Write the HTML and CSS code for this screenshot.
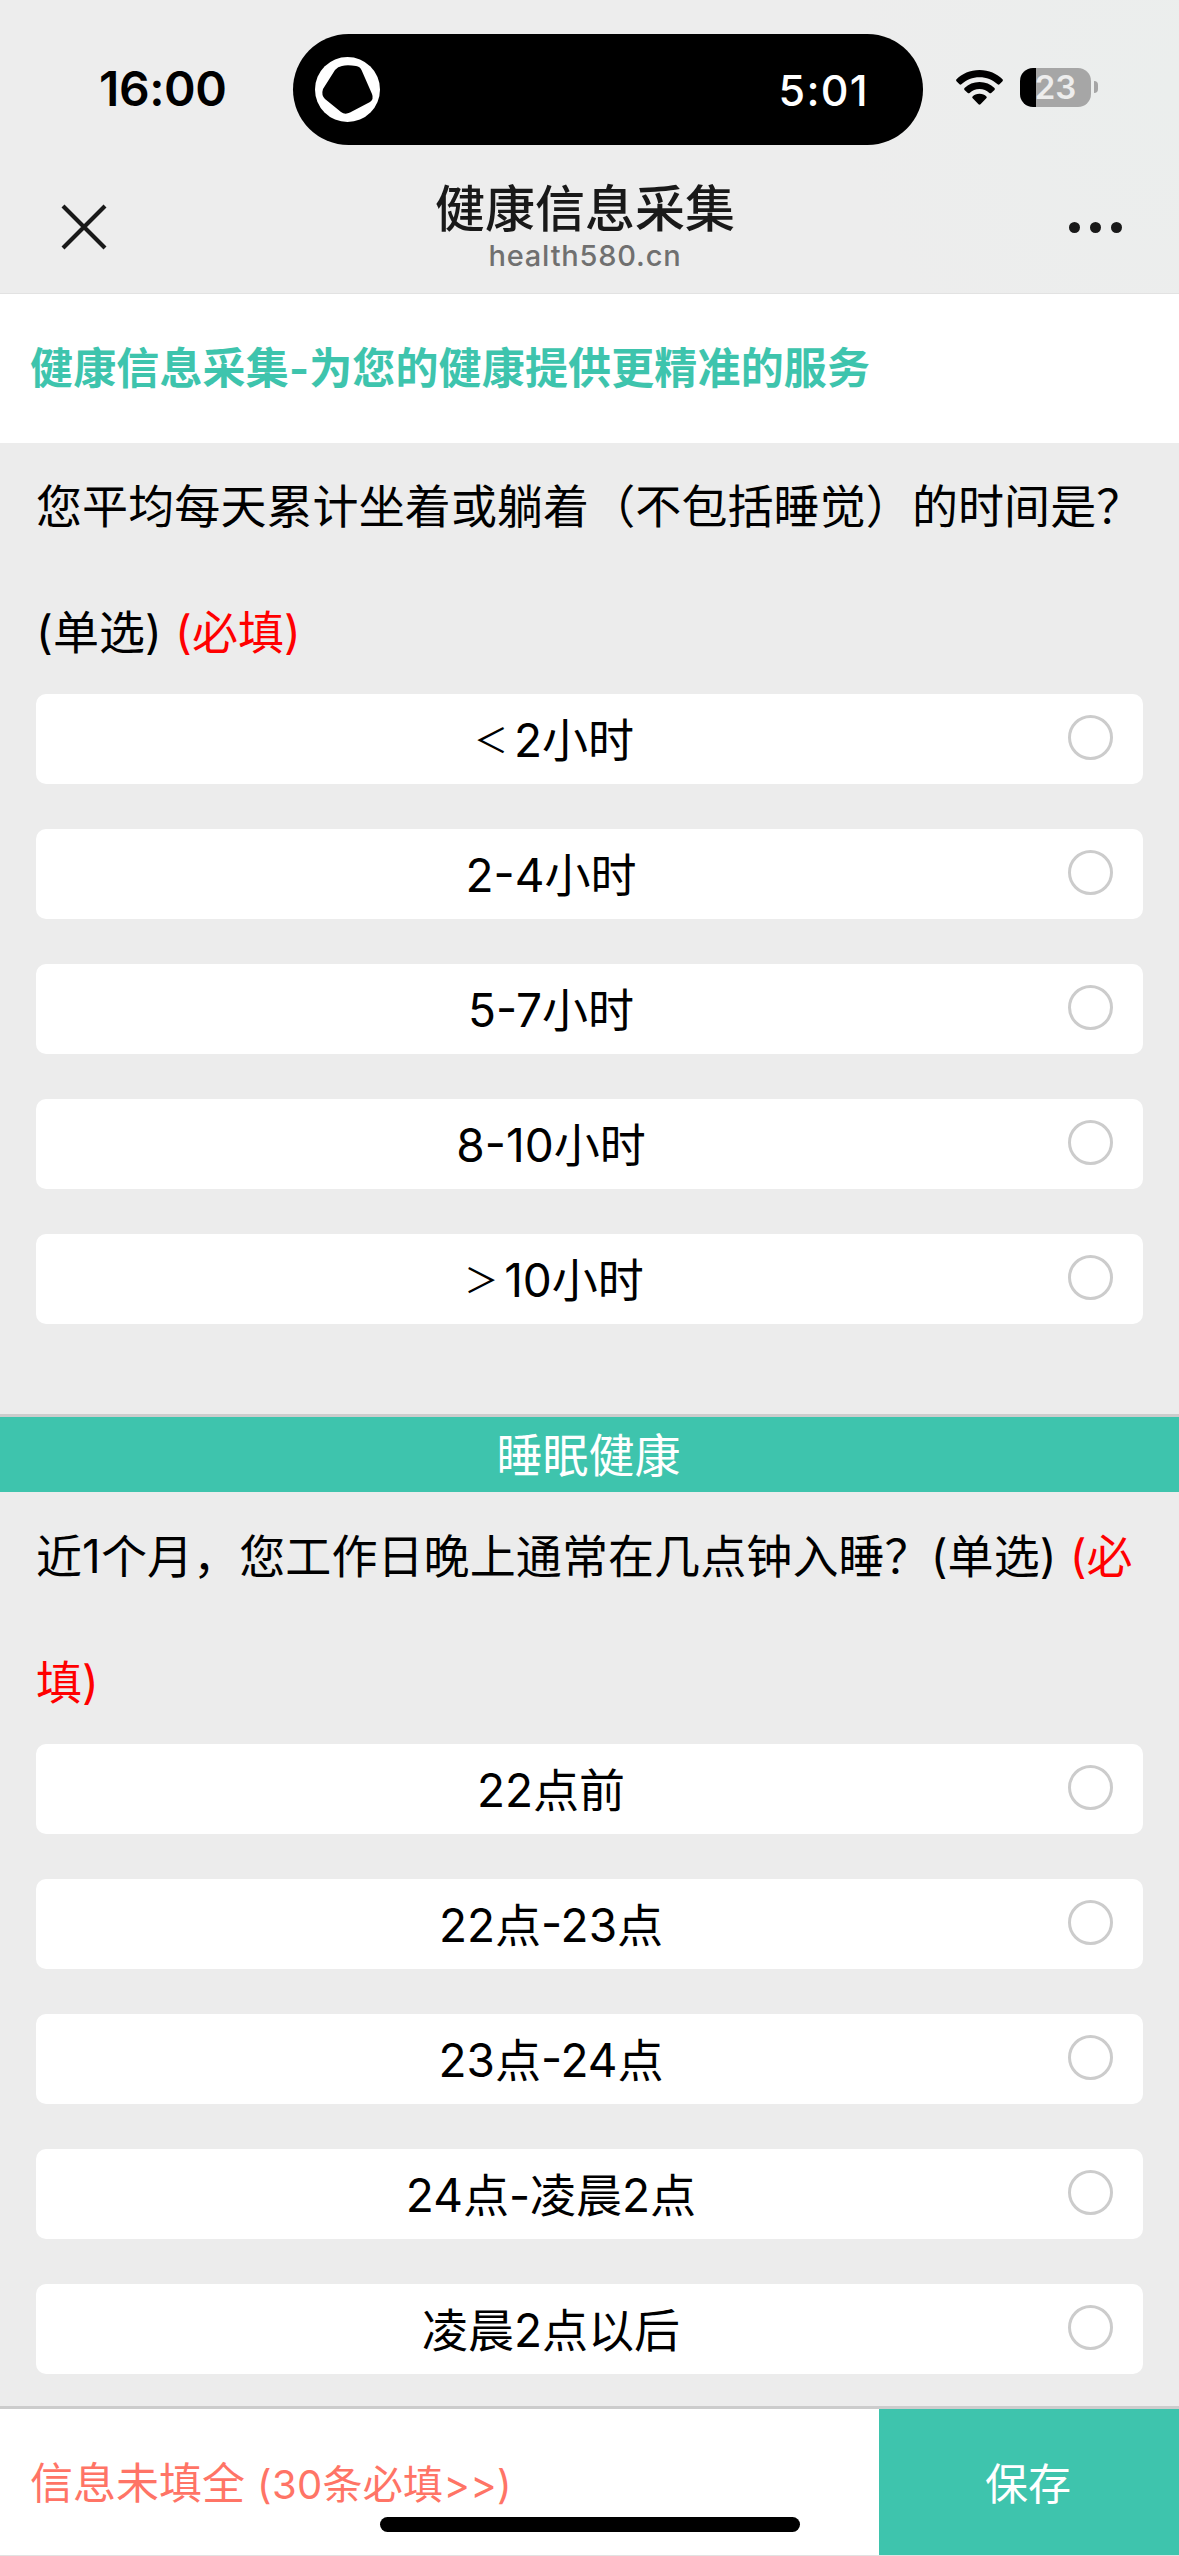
FILE: index.html
```html
<!DOCTYPE html>
<html lang="zh-CN">
<head>
  <meta charset="UTF-8" />
  <meta name="viewport" content="width=device-width, initial-scale=1.0" />
  <title>健康信息采集</title>
  <link rel="stylesheet" href="styles.css">
</head>
<body>

  <!-- Top: status bar + nav -->
  <header class="top">
    <div class="status-bar">
      <span class="time">16:00</span>
      <div class="island">
        <svg class="island-icon" width="65" height="65" viewBox="0 0 65 65">
          <circle cx="32.5" cy="32.5" r="32.5" fill="#fff"/>
          <path d="M27 9 Q32 7.500 41 9 Q45 9.500 46.500 13 L57 37 Q59 42 55 45 L35 55.500 Q30 58 26 55 L10 42 Q6 38 8 32 L20 13 Q23 9.500 27 9 Z" fill="#000"/>
        </svg>
        <span class="timer">5:01</span>
      </div>
      <svg class="wifi" width="47" height="35" viewBox="0 0 47 35">
        <path d="M23.500 0 C33 0 41 3.700 46.500 9.300 Q47.300 10.300 46.500 11.300 L43.500 14.300 Q42.600 15 41.600 14.200 C36.500 9.600 30.500 7.200 23.500 7.200 C16.500 7.200 10.500 9.600 5.400 14.200 Q4.400 15 3.500 14.300 L.5 11.300 Q-.3 10.300 .5 9.300 C6 3.700 14 0 23.500 0 Z"/>
        <path d="M23.500 12 C29.500 12 34.500 14.200 38.500 18 Q39.300 19 38.500 20 L35.200 23 Q34.400 23.700 33.400 23 C30.500 20.500 27.500 19 23.500 19 C19.500 19 16.500 20.500 13.600 23 Q12.600 23.700 11.800 23 L8.500 20 Q7.700 19 8.500 18 C12.500 14.200 17.500 12 23.500 12 Z"/>
        <path d="M23.500 23.800 C26.500 23.800 28.700 24.900 30.400 26.500 Q31.200 27.400 30.300 28.300 L24.500 34.300 Q23.500 35.200 22.500 34.300 L16.700 28.300 Q15.800 27.400 16.600 26.500 C18.300 24.900 20.500 23.800 23.500 23.800 Z"/>
      </svg>
      <div class="battery"><span>23</span></div>
      <i class="battery-cap"></i>
    </div>
    <nav class="nav">
      <svg class="close" width="46" height="46" viewBox="0 0 46 46">
        <path d="M2 2 L44 44 M44 2 L2 44" fill="none" stroke="#191919" stroke-width="4.200"/>
      </svg>
      <div class="nav-title">
        <h1>健康信息采集</h1>
        <p>health580.cn</p>
      </div>
      <div class="more"><i></i><i></i><i></i></div>
    </nav>
  </header>

  <main>
    <div class="banner">健康信息采集-为您的健康提供更精准的服务</div>

    <section class="question">
      <p class="question-text">您平均每天累计坐着或躺着（不包括睡觉）的时间是？(单选) <span class="required">(必填)</span></p>
      <ul class="options">
        <li><span><b>＜</b>2小时</span><i class="radio"></i></li>
        <li><span>2-4小时</span><i class="radio"></i></li>
        <li><span>5-7小时</span><i class="radio"></i></li>
        <li><span>8-10小时</span><i class="radio"></i></li>
        <li><span><b>＞</b>10小时</span><i class="radio"></i></li>
      </ul>
    </section>

    <h2 class="section-title">睡眠健康</h2>

    <section class="question second">
      <p class="question-text">近1个月，您工作日晚上通常在几点钟入睡？(单选) <span class="required">(必填)</span></p>
      <ul class="options">
        <li><span>22点前</span><i class="radio"></i></li>
        <li><span>22点-23点</span><i class="radio"></i></li>
        <li><span>23点-24点</span><i class="radio"></i></li>
        <li><span>24点-凌晨2点</span><i class="radio"></i></li>
        <li><span>凌晨2点以后</span><i class="radio"></i></li>
      </ul>
    </section>
  </main>

  <!-- Bottom bar -->
  <footer class="bottom-bar">
    <div class="tip">信息未填全 <small>(30条必填&gt;&gt;)</small></div>
    <button class="save">保存</button>
    <div class="home-indicator"></div>
  </footer>

</body>
</html>
```
FILE: styles.css
```css
* {
  box-sizing: border-box;
  margin: 0;
  padding: 0;
}

body {
  width: 1179px;
  height: 2556px;
  overflow: hidden;
  display: flex;
  flex-direction: column;
  background: #ececec;
  color: #000;
  font-family: Inter, "Noto Sans CJK SC", sans-serif;
  font-size: 46px;
}

/* status bar */
.top {
  height: 294px;
  flex-shrink: 0;
  background: radial-gradient(circle at 100% 30%, #ebeeed 0, #ededed 340px);
  border-bottom: 1px solid #e2e2e2;
}

.status-bar {
  height: 178px;
  padding-top: 34px;
  display: flex;
  align-items: flex-start;
}

.time {
  width: 293px;
  padding-left: 99px;
  margin-top: 25px;
  font-size: 48px;
  line-height: 60px;
  font-weight: 600;
  letter-spacing: -0.4px;
}

.island {
  width: 630px;
  height: 111px;
  padding: 0 54px 0 22px;
  display: flex;
  align-items: center;
  justify-content: space-between;
  background: #000;
  border-radius: 56px;
}

.timer {
  color: #fff;
  font-size: 43px;
  font-weight: 500;
  letter-spacing: 1.3px;
}

.wifi {
  margin: 36px 17px 0 33px;
}

.battery {
  width: 71px;
  height: 39px;
  margin-top: 34px;
  border-radius: 13px;
  background: linear-gradient(90deg, #000 16px, #a6a6a6 16px);
  color: #ededed;
  font-size: 33px;
  line-height: 39px;
  font-weight: 600;
  text-align: center;
}

.battery-cap {
  width: 4px;
  height: 12px;
  margin: 47px 0 0 3px;
  background: #a6a6a6;
  border-radius: 0 4px 4px 0;
}

/* nav */
.nav {
  padding: 0 57px 0 61px;
  display: flex;
  justify-content: space-between;
}

.close {
  margin-top: 26px;
}

.nav-title {
  text-align: center;
  margin-right: 6px;
}

.nav-title h1 {
  font-size: 50px;
  line-height: 62px;
  font-weight: 500;
  color: #191919;
}

.nav-title p {
  font-size: 29px;
  line-height: 32px;
  font-weight: 500;
  color: #707070;
  letter-spacing: 0.8px;
}

.more {
  display: flex;
  gap: 10px;
  margin-top: 44px;
}

.more i {
  width: 11px;
  height: 11px;
  border-radius: 50%;
  background: #191919;
}

/* form */
main {
  height: 2112px;
  flex-shrink: 0;
  overflow: hidden;
}

.banner {
  height: 149px;
  padding-left: 30px;
  background: #fff;
  color: #3ec4ad;
  font-size: 43px;
  line-height: 149px;
  font-weight: 700;
  letter-spacing: 0.15px;
}

.question {
  padding: 0 36px;
}

.question.second {
  padding-top: 1px;
}

.question-text {
  height: 251px;
  padding-top: 1px;
  line-height: 125.5px;
  letter-spacing: 0.1px;
}

.required {
  color: #f00;
}

.options {
  list-style: none;
}

.options li {
  height: 90px;
  margin-bottom: 45px;
  padding-right: 30px;
  display: flex;
  align-items: center;
  background: #fff;
  border-radius: 10px;
}

.options span {
  flex: 1;
  text-align: center;
  padding: 0 2px 4px 0;
}

.options b {
  padding: 0 6px;
  font-size: 34px;
  line-height: 1;
  font-weight: 400;
  vertical-align: 4px;
}

.radio {
  width: 45px;
  height: 45px;
  margin-bottom: 3px;
  border: 3px solid #ccc;
  border-radius: 50%;
}

.section-title {
  height: 78px;
  margin-top: 90px;
  padding-right: 2px;
  border-top: 3px solid #ccc;
  background: #3ec4ad;
  color: #fff;
  font-size: 46px;
  line-height: 76px;
  font-weight: 400;
  text-align: center;
}

/* bottom bar */
.bottom-bar {
  position: relative;
  height: 150px;
  flex-shrink: 0;
  display: flex;
  background: #fff;
  border-top: 3px solid #ccc;
  border-bottom: 1px solid #e2e2e2;
}

.tip {
  flex: 1;
  padding-left: 30px;
  color: #ff7466;
  font-size: 43px;
  line-height: 149px;
}

.tip small {
  font-size: 40px;
  letter-spacing: 0.3px;
}

.save {
  width: 300px;
  padding: 0 2px 2px 0;
  border: none;
  background: #3ec4ad;
  color: #fff;
  font-family: inherit;
  font-size: 43px;
}

.home-indicator {
  position: absolute;
  left: 380px;
  bottom: 23px;
  width: 420px;
  height: 15px;
  border-radius: 8px;
  background: #000;
}
```
